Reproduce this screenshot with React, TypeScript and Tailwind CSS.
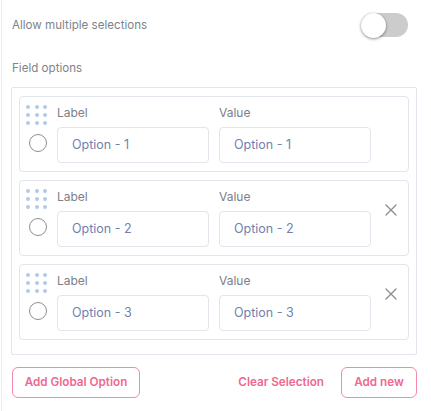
import React from "react";

function Dots() {
  return (
    <div className="grid grid-cols-3 gap-x-[4px] gap-y-[4px] w-[22px]">
      {Array.from({ length: 9 }).map((_, i) => (
        <span key={i} className="w-[4px] h-[4px] rounded-full bg-[#b3cbe8]" />
      ))}
    </div>
  );
}

function XIcon() {
  return (
    <svg width="12" height="12" viewBox="0 0 12 12" fill="none" stroke="#8c8c8c" strokeWidth="1.3" strokeLinecap="round">
      <path d="M1 1 L11 11 M11 1 L1 11" />
    </svg>
  );
}

function Card({ n, removable }: { n: number; removable: boolean }) {
  return (
    <div className="border border-[#e3e5ec] rounded-[4px] flex pl-[6px] pt-[8px] pb-[8px] pr-[11px]">
      <div className="flex flex-col w-[31px]">
        <Dots />
        <span className="mt-[9px] ml-[3px] w-[18px] h-[18px] rounded-full border border-[#8f8f8f] bg-white" />
      </div>
      <div className="flex flex-col w-[152px]">
        <span className="text-[12px] leading-[16px] text-[#7d8089] h-[22px]">Label</span>
        <div className="h-[36px] border border-[#e3e5ec] rounded-[4px] flex items-center pl-[14px] text-[12.5px] text-[#7280b0]">
          Option - {n}
        </div>
      </div>
      <div className="flex flex-col w-[152px] ml-[10px]">
        <span className="text-[12px] leading-[16px] text-[#7d8089] h-[22px]">Value</span>
        <div className="h-[36px] border border-[#e3e5ec] rounded-[4px] flex items-center pl-[14px] text-[12.5px] text-[#7280b0]">
          Option - {n}
        </div>
      </div>
      <div className="flex-1 flex justify-end pt-[15px]">
        {removable && <XIcon />}
      </div>
    </div>
  );
}

export default function App() {
  return (
    <div className="w-[431px] h-[411px] bg-white" style={{ fontFamily: "Inter, 'Noto Sans', sans-serif" }}>
      <div className="ml-[1px] h-full border-l border-[#ececec] pl-[9px] pr-[14px]">
        <div className="flex items-center justify-between pt-[12px] h-[38px]">
          <span className="text-[11.6px] text-[#80838c] ml-[1px] mt-[2px]">Allow multiple selections</span>
          <div className="relative w-[47px] h-[24px] rounded-full bg-[#cccccc] mr-[9px]">
            <span className="absolute left-0 top-0 w-[25px] h-[25px] rounded-full bg-white shadow-[0_1px_3px_rgba(0,0,0,0.45)]" />
          </div>
        </div>
        <div className="text-[11.6px] text-[#80838c] mt-[22px] leading-[16px] ml-[1px]">Field options</div>
        <div className="mt-[11px] border border-[#e3e5ec] rounded-[2px] px-[7px] pt-[8px] pb-[14px] flex flex-col gap-[8px]">
          <Card n={1} removable={false} />
          <Card n={2} removable={true} />
          <Card n={3} removable={true} />
        </div>
        <div className="flex items-center mt-[12px] ml-[1px]">
          <button className="h-[31px] w-[128px] border border-[#f48aab] rounded-[6px] text-[11.7px] font-semibold text-[#f0688f]">
            Add Global Option
          </button>
          <span className="ml-auto text-[11.7px] font-semibold text-[#f0688f]">Clear Selection</span>
          <button className="ml-[17px] h-[31px] w-[76px] border border-[#f48aab] rounded-[6px] text-[11.7px] font-semibold text-[#f0688f]">
            Add new
          </button>
        </div>
      </div>
    </div>
  );
}
